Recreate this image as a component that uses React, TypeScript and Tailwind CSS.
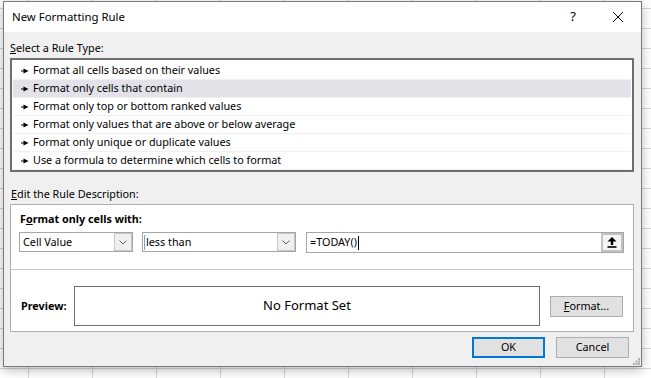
import React from "react";

const rules = [
  "Format all cells based on their values",
  "Format only cells that contain",
  "Format only top or bottom ranked values",
  "Format only values that are above or below average",
  "Format only unique or duplicate values",
  "Use a formula to determine which cells to format",
];

function Bullet() {
  return (
    <svg width="8" height="6" viewBox="0 0 8 6" className="shrink-0">
      <rect x="0" y="2.5" width="4" height="1" fill="#000" />
      <polygon points="2.5,0.5 7.5,3 2.5,5.5" fill="#000" />
    </svg>
  );
}

function Chevron() {
  return (
    <svg width="8" height="5" viewBox="0 0 8 5">
      <polyline points="0.5,0.5 4,4 7.5,0.5" fill="none" stroke="#606060" strokeWidth="1" />
    </svg>
  );
}

function Dropdown({ width, text, caret }: { width: string; text: string; caret?: boolean }) {
  return (
    <div className={`${width} h-[20px] border border-[#a6a6a6] bg-white flex items-stretch`}>
      <div className="flex-1 flex items-center pl-[3px] relative">
        {caret && <span className="absolute left-[1px] top-[2px] w-px h-[15px] bg-[#6ea6d8]" />}
        <span>{text}</span>
      </div>
      <div className="w-[18px] border border-[#c6c6c6] bg-[#f0f0f0] flex items-center justify-center">
        <Chevron />
      </div>
    </div>
  );
}

export default function App() {
  return (
    <div className="relative w-[651px] h-[378px] overflow-hidden bg-white [background-image:linear-gradient(to_right,#d6d6d6_1px,transparent_1px),linear-gradient(to_bottom,#d6d6d6_1px,transparent_1px)] [background-size:64px_20px] [background-position:28px_8px] [font-family:'Noto_Sans',sans-serif] text-[10.8px] text-black">
      <div className="absolute left-[3px] top-[1px] w-[639px] h-[366px] border border-[#7a7a7a] bg-[#f0f0f0] shadow-[0_3px_10px_rgba(0,0,0,0.28)] flex flex-col">
        <div className="h-[30px] bg-white flex items-center shrink-0">
          <span className="pl-[8px] flex-1 text-[11.4px]">New Formatting Rule</span>
          <span className="w-[44px] text-center text-[13px]">?</span>
          <span className="w-[46px] flex items-center justify-center">
            <svg width="10" height="10" viewBox="0 0 10 10">
              <line x1="0" y1="0" x2="10" y2="10" stroke="#000" strokeWidth="1" />
              <line x1="10" y1="0" x2="0" y2="10" stroke="#000" strokeWidth="1" />
            </svg>
          </span>
        </div>

        <div className="flex-1 flex flex-col pl-[6px] pr-[7px] pt-[8px]">
          <div className="h-[16px] leading-[16px]">
            <span className="underline">S</span>elect a Rule Type:
          </div>
          <div className="mt-[2px] h-[114px] border-2 border-[#6e6e6e] bg-white px-[1px] pt-[2px]">
            {rules.map((r, i) => (
              <div
                key={r}
                className={`h-[18px] flex items-center gap-[4px] pl-[8px] border-b border-[#f0f0f0] ${i === 1 ? "bg-[#e2e2e8]" : ""}`}
              >
                <Bullet />
                <span>{r}</span>
              </div>
            ))}
          </div>

          <div className="mt-[14px] h-[16px] leading-[16px] pl-[1px]">
            <span className="underline">E</span>dit the Rule Description:
          </div>
          <div className="mt-[2px] h-[128px] border border-[#adadad] bg-white flex flex-col">
            <div className="mt-[6px] pl-[9px] h-[16px] leading-[16px] font-bold">
              F<span className="underline">o</span>rmat only cells with:
            </div>
            <div className="mt-[5px] pl-[8px] flex items-start h-[21px]">
              <Dropdown width="w-[114px]" text="Cell Value" />
              <div className="w-[9px]" />
              <Dropdown width="w-[154px]" text="less than" caret />
              <div className="w-[10px]" />
              <div className="w-[318px] h-[21px] border border-[#a6a6a6] bg-white flex items-stretch">
                <div className="flex-1 flex items-center pl-[3px]">
                  <span>=TODAY()</span>
                  <span className="w-px h-[14px] bg-black ml-[1px]" />
                </div>
                <div className="w-[22px] border-2 border-[#c2c2c2] bg-[#f5f5f5] flex items-center justify-center">
                  <svg width="10" height="11" viewBox="0 0 10 11">
                    <polygon points="5,0 9.5,4.5 0.5,4.5" fill="#000" />
                    <rect x="3.8" y="4" width="2.4" height="4" fill="#000" />
                    <rect x="0.5" y="9.2" width="9" height="1.6" fill="#000" />
                  </svg>
                </div>
              </div>
            </div>
            <div className="mt-[16px] h-px bg-[#c8c8c8]" />
            <div className="mt-[16px] flex items-center pl-[10px]">
              <span className="w-[53px] font-bold">Preview:</span>
              <div className="w-[466px] h-[40px] border border-[#6e6e6e] flex items-center justify-center text-[13px]">
                No Format Set
              </div>
              <div className="ml-[10px] w-[73px] h-[21px] border border-[#adadad] bg-[#e1e1e1] flex items-center justify-center">
                <span>
                  <span className="underline">F</span>ormat...
                </span>
              </div>
            </div>
          </div>

          <div className="mt-[5px] flex justify-end gap-[11px] pr-[5px]">
            <div className="w-[73px] h-[21px] border-2 border-[#0078d7] bg-[#e1e1e1] flex items-center justify-center">
              OK
            </div>
            <div className="w-[73px] h-[21px] border border-[#adadad] bg-[#e1e1e1] flex items-center justify-center">
              Cancel
            </div>
          </div>
        </div>

        <svg width="7" height="7" viewBox="0 0 7 7" className="absolute right-[1px] bottom-[1px]">
          <rect x="5" y="0" width="2" height="2" fill="#b0b0b0" />
          <rect x="2.5" y="2.5" width="2" height="2" fill="#b0b0b0" />
          <rect x="5" y="2.5" width="2" height="2" fill="#b0b0b0" />
          <rect x="0" y="5" width="2" height="2" fill="#b0b0b0" />
          <rect x="2.5" y="5" width="2" height="2" fill="#b0b0b0" />
          <rect x="5" y="5" width="2" height="2" fill="#b0b0b0" />
        </svg>
      </div>
    </div>
  );
}
